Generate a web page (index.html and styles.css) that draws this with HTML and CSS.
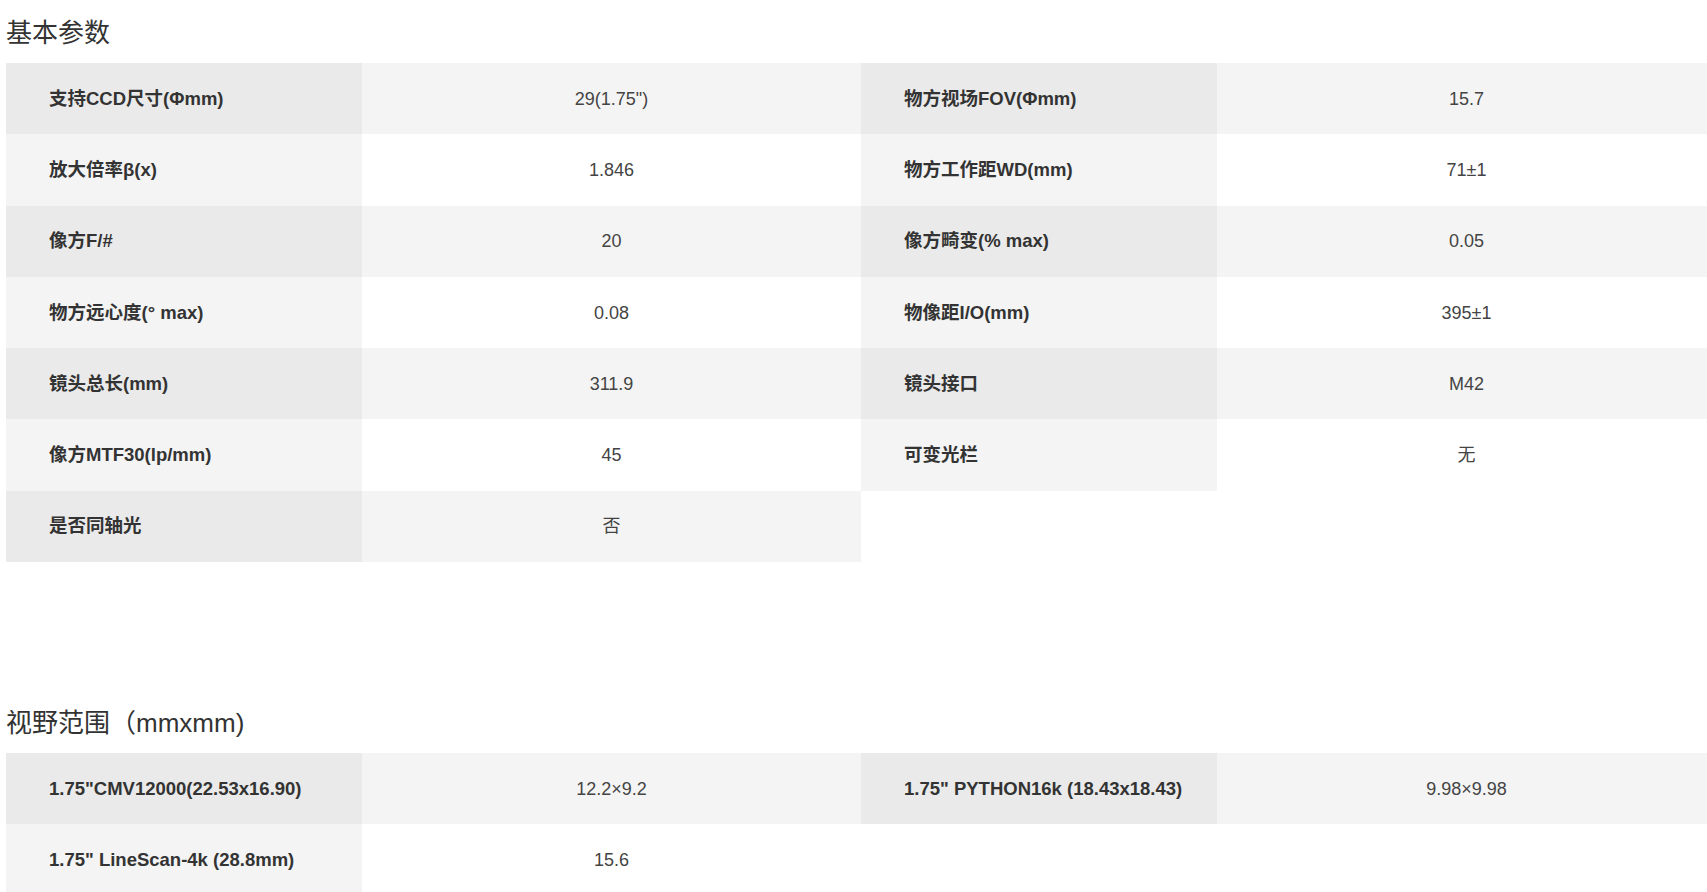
FILE: index.html
```html
<!DOCTYPE html>
<html lang="zh-CN">
<head>
<meta charset="utf-8">
<title>参数</title>
<link rel="stylesheet" href="styles.css">
</head>
<body>
<div class="page">
  <section class="section">
    <h2 class="title">基本参数</h2>
    <div class="table">
      <div class="row">
        <div class="item"><span class="label">支持CCD尺寸(Φmm)</span><span class="value">29(1.75")</span></div>
        <div class="item"><span class="label">物方视场FOV(Φmm)</span><span class="value">15.7</span></div>
      </div>
      <div class="row">
        <div class="item"><span class="label">放大倍率β(x)</span><span class="value">1.846</span></div>
        <div class="item"><span class="label">物方工作距WD(mm)</span><span class="value">71±1</span></div>
      </div>
      <div class="row">
        <div class="item"><span class="label">像方F/#</span><span class="value">20</span></div>
        <div class="item"><span class="label">像方畸变(% max)</span><span class="value">0.05</span></div>
      </div>
      <div class="row">
        <div class="item"><span class="label">物方远心度(° max)</span><span class="value">0.08</span></div>
        <div class="item"><span class="label">物像距I/O(mm)</span><span class="value">395±1</span></div>
      </div>
      <div class="row">
        <div class="item"><span class="label">镜头总长(mm)</span><span class="value">311.9</span></div>
        <div class="item"><span class="label">镜头接口</span><span class="value">M42</span></div>
      </div>
      <div class="row">
        <div class="item"><span class="label">像方MTF30(lp/mm)</span><span class="value">45</span></div>
        <div class="item"><span class="label">可变光栏</span><span class="value">无</span></div>
      </div>
      <div class="row">
        <div class="item"><span class="label">是否同轴光</span><span class="value">否</span></div>
      </div>
    </div>
  </section>
  <section class="section">
    <h2 class="title">视野范围（mmxmm)</h2>
    <div class="table">
      <div class="row">
        <div class="item"><span class="label">1.75"CMV12000(22.53x16.90)</span><span class="value">12.2×9.2</span></div>
        <div class="item"><span class="label">1.75" PYTHON16k (18.43x18.43)</span><span class="value">9.98×9.98</span></div>
      </div>
      <div class="row">
        <div class="item"><span class="label">1.75" LineScan-4k (28.8mm)</span><span class="value">15.6</span></div>
      </div>
    </div>
  </section>
</div>
</body>
</html>
```

FILE: styles.css
```css
html {
  overflow: hidden;
}
body {
  margin: 0;
  background: #fff;
  font-family: "Liberation Sans", Arial, "Noto Sans CJK SC", sans-serif;
  color: #333;
}
.page {
  padding-left: 6px;
}
.section + .section {
  margin-top: 128px;
}
.title {
  margin: 0;
  padding: 15px 0 12px 0;
  height: 36px;
  box-sizing: content-box;
  font-size: 26px;
  line-height: 36px;
  font-weight: normal;
  color: #333;
}
.table {
  width: 1710px;
}
.row {
  display: flex;
  height: 71.3px;
}
.item {
  display: flex;
  width: 855px;
  flex: none;
}
.label {
  width: 356px;
  flex: none;
  box-sizing: border-box;
  padding-left: 43px;
  display: flex;
  align-items: center;
  font-size: 18.5px;
  line-height: 22px;
  font-weight: bold;
  color: #333;
  white-space: nowrap;
}
.value {
  flex: 1;
  display: flex;
  align-items: center;
  justify-content: center;
  font-size: 18px;
  line-height: 22px;
  color: #444;
  white-space: nowrap;
}
.row:nth-child(odd) .label {
  background: #eaeaea;
}
.row:nth-child(odd) .value {
  background: #f4f4f4;
}
.row:nth-child(even) .label {
  background: #f4f4f4;
}
.row:nth-child(even) .value {
  background: #fff;
}
```
